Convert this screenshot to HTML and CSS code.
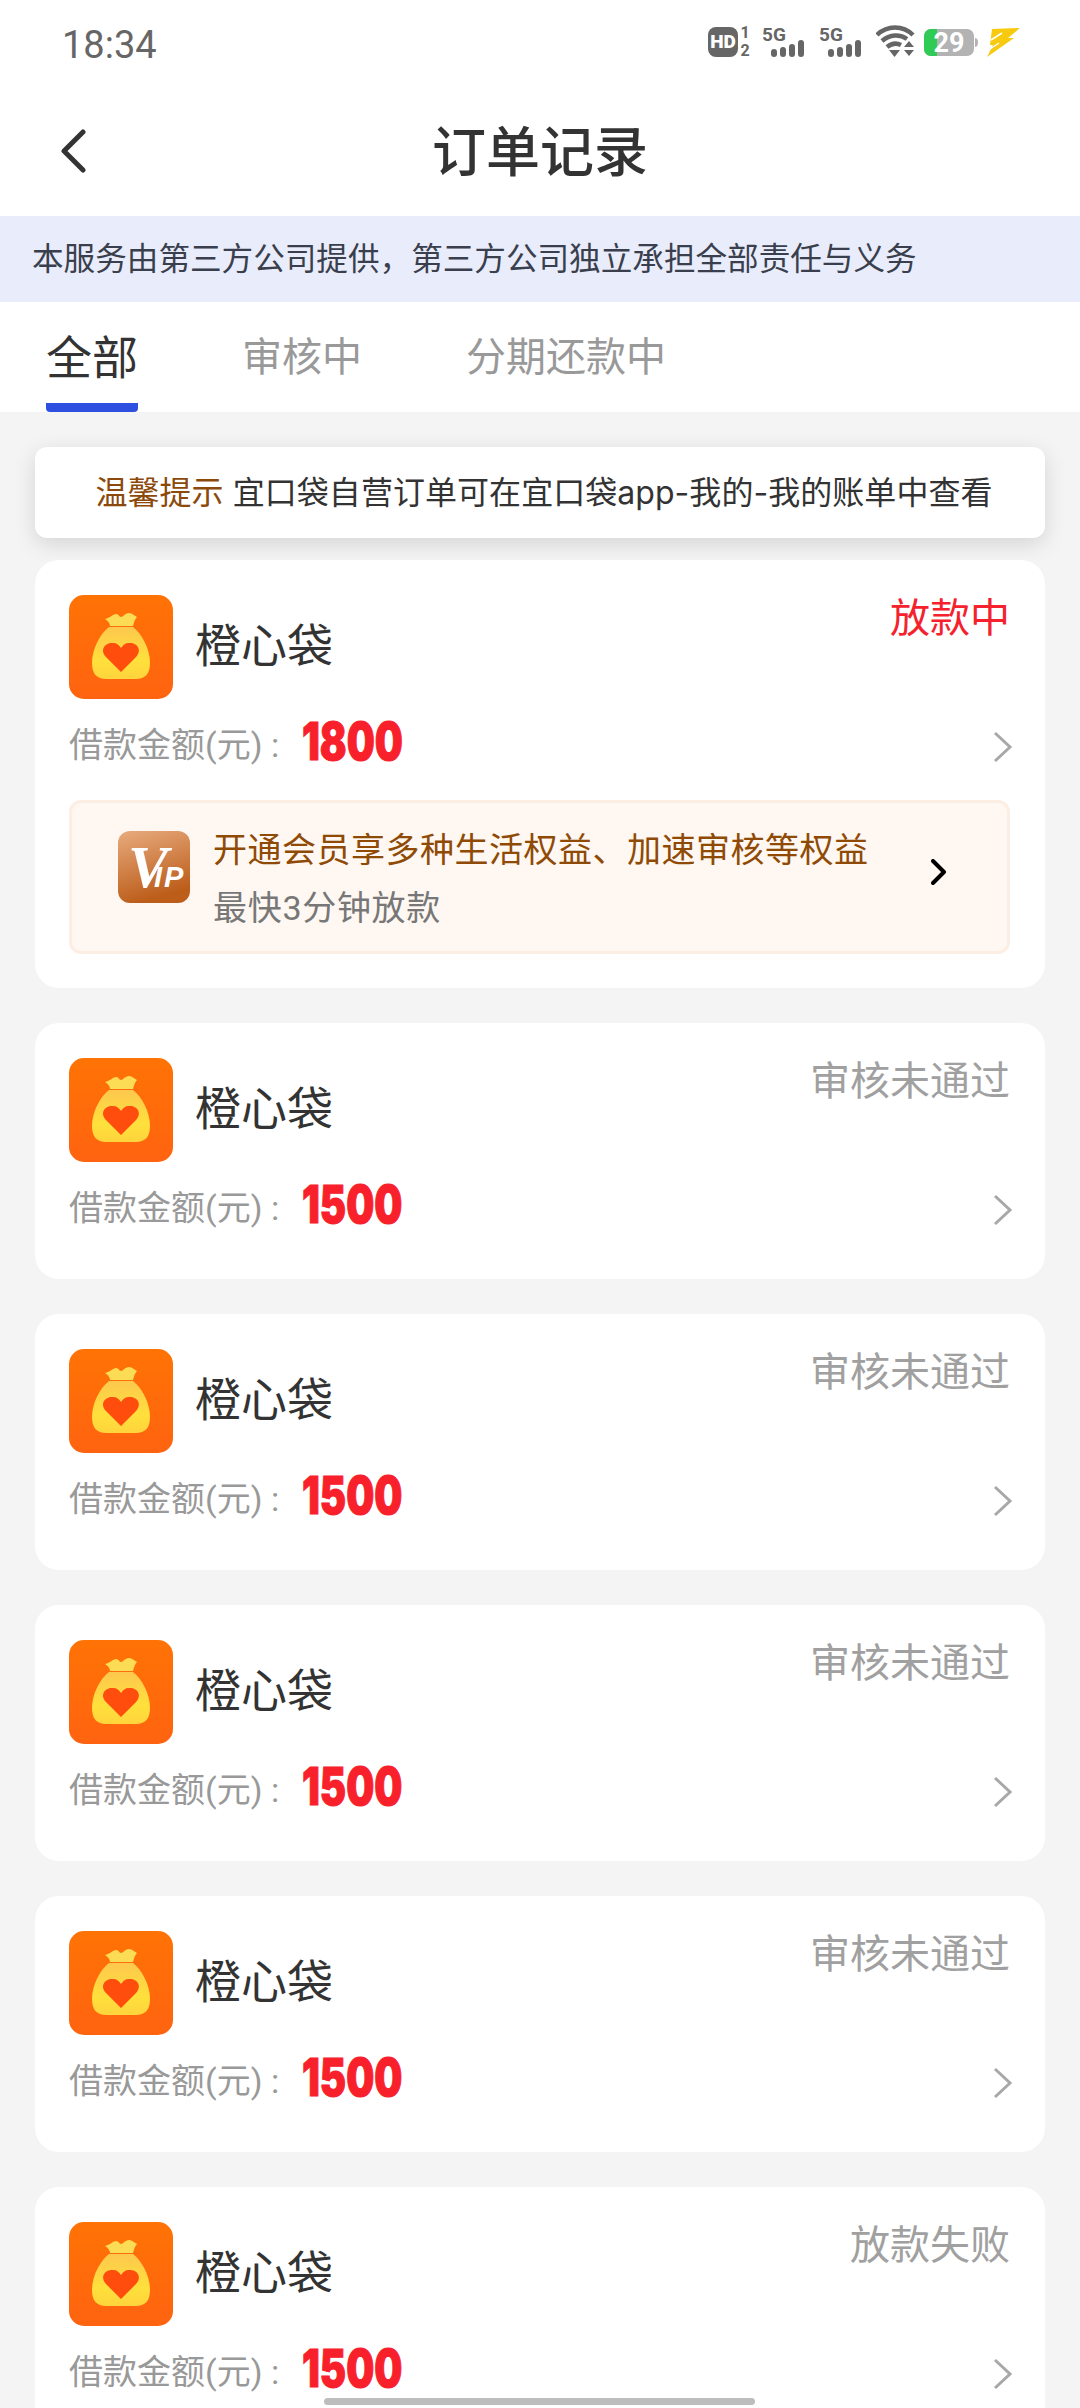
FILE: index.html
```html
<!DOCTYPE html>
<html lang="zh-CN">
<head>
  <meta charset="UTF-8">
  <title>订单记录</title>
  <link rel="stylesheet" href="styles.css">
</head>
<body>

<svg class="sprite" width="0" height="0">
  <defs>
    <linearGradient id="bagBg" x1="0" y1="0" x2="0" y2="1">
      <stop offset="0" stop-color="#ff7305"/>
      <stop offset="1" stop-color="#ff6310"/>
    </linearGradient>
    <linearGradient id="bagBody" x1="0" y1="0" x2="0" y2="1">
      <stop offset="0" stop-color="#fdc84e"/>
      <stop offset="0.65" stop-color="#ffe03c"/>
      <stop offset="1" stop-color="#fed43c"/>
    </linearGradient>
    <linearGradient id="vipBg" x1="0" y1="0" x2="0.3" y2="1">
      <stop offset="0" stop-color="#e8ab7e"/>
      <stop offset="1" stop-color="#bc5d1a"/>
    </linearGradient>
    <symbol id="bag" viewBox="0 0 104 104">
      <rect width="104" height="104" rx="15" fill="url(#bagBg)"/>
      <path d="M36 24C41 23 44 19 47 19C50 19 50 22 52 22C54 22 56 18 60 18C63 18 66 21 68 22C66 24 65 27 64 31L41 31C41 28 39 26 36 24Z" fill="#fcdb55"/>
      <path d="M40 32L64 32C73 39 81 54 81 68C81 79 76 84 67 84L37 84C28 84 23 79 23 68C23 54 31 39 40 32Z" fill="url(#bagBody)"/>
      <path d="M52 77L37 62C30 54 37 47 44 48C48 48 50 50 52 53C54 50 56 48 60 48C67 47 74 54 67 62Z" fill="#ff4d0d"/>
    </symbol>
    <symbol id="chevron" viewBox="0 0 20 32">
      <path d="M2 2L17 16L2 30" fill="none" stroke="#a8a8a8" stroke-width="3"/>
    </symbol>
  </defs>
</svg>

<div class="status-bar">
  <span class="time">18:34</span>
  <div class="status-icons">
    <svg class="ic-hd" width="44" height="42" viewBox="0 -6 44 42">
      <rect x="0" y="1" width="30" height="30" rx="8" fill="#666"/>
      <text x="15" y="22" class="hd-text">HD</text>
      <text x="37" y="12" class="sim-text">1</text>
      <text x="37" y="30" class="sim-text">2</text>
    </svg>
    <svg class="ic-signal" width="44" height="42" viewBox="0 -6 44 42">
      <text x="0" y="15" class="net-text">5G</text>
      <rect x="9" y="23" width="6" height="8" rx="3" fill="#666"/>
      <rect x="18" y="21" width="6" height="10" rx="3" fill="#666"/>
      <rect x="27" y="18" width="6" height="13" rx="3" fill="#666"/>
      <rect x="36" y="14" width="6" height="17" rx="3" fill="#666"/>
    </svg>
    <svg class="ic-signal" width="44" height="42" viewBox="0 -6 44 42">
      <text x="0" y="15" class="net-text">5G</text>
      <rect x="9" y="23" width="6" height="8" rx="3" fill="#666"/>
      <rect x="18" y="21" width="6" height="10" rx="3" fill="#666"/>
      <rect x="27" y="18" width="6" height="13" rx="3" fill="#666"/>
      <rect x="36" y="14" width="6" height="17" rx="3" fill="#666"/>
    </svg>
    <svg class="ic-wifi" width="39" height="42" viewBox="0 -6 39 42">
      <path d="M1 9C11 -1 27 -1 37 9" fill="none" stroke="#666" stroke-width="4.500"/>
      <path d="M6 15C14 8 24 8 31 13" fill="none" stroke="#666" stroke-width="4.500"/>
      <path d="M11 21C16 17 21 17 25 19" fill="none" stroke="#666" stroke-width="4.500"/>
      <path d="M13 24L24 24L18.500 31Z" fill="#666"/>
      <path d="M28 21L33 15L38 21ZM28 24L38 24L33 30Z" fill="#666"/>
    </svg>
    <svg class="ic-battery" width="54" height="42" viewBox="0 -6 54 42">
      <rect x="0" y="3" width="50" height="27" rx="7" fill="#b3b3b3"/>
      <path d="M7 3L13 3L13 30L7 30A7 7 0 0 1 0 23L0 10A7 7 0 0 1 7 3Z" fill="#2fcb55"/>
      <path d="M51 12C53 12 54 14 54 16.500C54 19 53 21 51 21Z" fill="#b3b3b3"/>
      <text x="25" y="26" class="bat-text">29</text>
    </svg>
    <svg class="ic-bolt" width="33" height="42" viewBox="0 -6 33 42">
      <path d="M5 3L33 2L21 12L27 12L0 31L6 19L3 19Z" fill="#f7c90f"/>
      <path d="M4 14L15 7M3 23L12 17" stroke="#fff" stroke-width="1.500"/>
    </svg>
  </div>
</div>

<div class="nav-bar">
  <svg class="back" width="26" height="44" viewBox="0 0 26 44">
    <path d="M23 3L4 22L23 41" fill="none" stroke="#333" stroke-width="5" stroke-linecap="round" stroke-linejoin="round"/>
  </svg>
  <h1>订单记录</h1>
</div>

<div class="notice">本服务由第三方公司提供，第三方公司独立承担全部责任与义务</div>

<div class="tabs">
  <div class="tab active">全部</div>
  <div class="tab">审核中</div>
  <div class="tab">分期还款中</div>
</div>

<div class="list">
  <div class="hint"><em>温馨提示</em> 宜口袋自营订单可在宜口袋app-我的-我的账单中查看</div>

  <div class="card has-promo">
    <div class="card-top">
      <svg class="logo"><use href="#bag"/></svg>
      <span class="name">橙心袋</span>
      <span class="state red">放款中</span>
    </div>
    <div class="amount-row">
      <span class="label">借款金额(元) :</span>
      <span class="amount">1800</span>
      <svg class="arrow"><use href="#chevron"/></svg>
    </div>
    <div class="promo">
      <svg class="vip" width="72" height="72" viewBox="0 0 72 72">
        <rect width="72" height="72" rx="12" fill="url(#vipBg)"/>
        <text x="10" y="56" class="vip-v">V<tspan class="vip-ip" dx="-14">IP</tspan></text>
      </svg>
      <div class="promo-text">
        <div class="promo-title">开通会员享多种生活权益、加速审核等权益</div>
        <div class="promo-sub">最快3分钟放款</div>
      </div>
      <svg class="promo-arrow" width="16" height="26" viewBox="0 0 16 26">
        <path d="M2 2L13 13L2 24" fill="none" stroke="#000" stroke-width="4" stroke-linecap="round" stroke-linejoin="round"/>
      </svg>
    </div>
  </div>

  <div class="card">
    <div class="card-top">
      <svg class="logo"><use href="#bag"/></svg>
      <span class="name">橙心袋</span>
      <span class="state">审核未通过</span>
    </div>
    <div class="amount-row">
      <span class="label">借款金额(元) :</span>
      <span class="amount">1500</span>
      <svg class="arrow"><use href="#chevron"/></svg>
    </div>
  </div>

  <div class="card">
    <div class="card-top">
      <svg class="logo"><use href="#bag"/></svg>
      <span class="name">橙心袋</span>
      <span class="state">审核未通过</span>
    </div>
    <div class="amount-row">
      <span class="label">借款金额(元) :</span>
      <span class="amount">1500</span>
      <svg class="arrow"><use href="#chevron"/></svg>
    </div>
  </div>

  <div class="card">
    <div class="card-top">
      <svg class="logo"><use href="#bag"/></svg>
      <span class="name">橙心袋</span>
      <span class="state">审核未通过</span>
    </div>
    <div class="amount-row">
      <span class="label">借款金额(元) :</span>
      <span class="amount">1500</span>
      <svg class="arrow"><use href="#chevron"/></svg>
    </div>
  </div>

  <div class="card">
    <div class="card-top">
      <svg class="logo"><use href="#bag"/></svg>
      <span class="name">橙心袋</span>
      <span class="state">审核未通过</span>
    </div>
    <div class="amount-row">
      <span class="label">借款金额(元) :</span>
      <span class="amount">1500</span>
      <svg class="arrow"><use href="#chevron"/></svg>
    </div>
  </div>

  <div class="card">
    <div class="card-top">
      <svg class="logo"><use href="#bag"/></svg>
      <span class="name">橙心袋</span>
      <span class="state">放款失败</span>
    </div>
    <div class="amount-row">
      <span class="label">借款金额(元) :</span>
      <span class="amount">1500</span>
      <svg class="arrow"><use href="#chevron"/></svg>
    </div>
  </div>
</div>

<div class="home-bar"></div>

</body>
</html>
```

FILE: styles.css
```css
* { margin: 0; padding: 0; box-sizing: border-box; }

body {
  font-family: Roboto, "Noto Sans CJK SC", sans-serif;
  width: 1080px;
  height: 2408px;
  overflow: hidden;
  background: #f4f4f4;
  color: #333;
}

.sprite { position: absolute; }

/* Status bar */
.status-bar {
  display: flex;
  align-items: center;
  justify-content: space-between;
  height: 84px;
  padding: 0 60px 0 62px;
  background: #fff;
}

.time {
  margin-top: 6px;
  font-size: 38px;
  color: #666;
}

.status-icons {
  display: flex;
  align-items: center;
  margin-top: -2px;
}

.ic-hd { margin-right: 10px; }
.ic-signal { margin-right: 13px; }
.ic-wifi { margin-right: 9px; }
.ic-battery { margin-right: 9px; }

.hd-text, .sim-text, .net-text, .bat-text {
  font-family: Roboto, sans-serif;
  font-weight: 700;
  text-anchor: middle;
}

.hd-text { font-size: 19px; font-weight: 900; fill: #fff; }
.sim-text { font-size: 16px; fill: #666; }
.net-text { font-size: 19px; fill: #666; text-anchor: start; }
.bat-text { font-size: 27px; fill: #fff; }

/* Nav */
.nav-bar {
  position: relative;
  display: flex;
  align-items: center;
  justify-content: center;
  height: 132px;
  background: #fff;
}

.nav-bar h1 {
  margin-top: -4px;
  font-size: 54px;
  font-weight: 500;
  color: #333;
}

.back {
  position: absolute;
  left: 60px;
  top: 45px;
}

.notice {
  height: 86px;
  line-height: 88px;
  padding-left: 32px;
  font-size: 31.600px;
  color: #3a3f4d;
  background: #e9ecfa;
}

/* Tabs */
.tabs {
  display: flex;
  gap: 104px;
  height: 110px;
  padding-left: 46px;
  background: #fff;
}

.tab {
  height: 110px;
  line-height: 112px;
  font-size: 40px;
  color: #999;
}

.tab.active {
  font-size: 46px;
  color: #333;
  border-bottom: 9px solid #2f4fe0;
  border-radius: 0 0 4px 4px;
}

/* List */
.list {
  padding: 35px 35px 0;
}

.hint {
  height: 91px;
  line-height: 91px;
  margin-bottom: 22px;
  padding-left: 8px;
  text-align: center;
  font-family: Inter, "Noto Sans CJK SC", sans-serif;
  font-size: 32px;
  letter-spacing: 0.050px;
  color: #333;
  background: #fff;
  border-radius: 12px;
  box-shadow: 0 6px 22px rgba(0, 0, 0, 0.13);
}

.hint em {
  font-style: normal;
  color: #8b4a0b;
}

.card {
  height: 256px;
  padding: 35px 35px 0 34px;
  margin-bottom: 35px;
  background: #fff;
  border-radius: 24px;
}

.card.has-promo { height: 428px; }

.card-top {
  display: flex;
  align-items: flex-start;
  height: 104px;
}

.logo {
  width: 104px;
  height: 104px;
  flex-shrink: 0;
}

.name {
  margin: 21px 0 0 22px;
  font-size: 46px;
  line-height: 60px;
  color: #333;
}

.state {
  margin: 1px 0 0 auto;
  font-size: 40px;
  line-height: 46px;
  color: #a0a0a0;
}

.state.red { color: #f5212d; }

.amount-row {
  display: flex;
  align-items: center;
  height: 46px;
  margin-top: 20px;
}

.label {
  font-size: 34px;
  color: #999;
}

.amount {
  display: inline-block;
  margin-left: 23px;
  font-family: Inter, sans-serif;
  font-size: 52px;
  font-weight: 900;
  line-height: 46px;
  color: #f8202a;
  -webkit-text-stroke: 1px #f8202a;
  transform: scaleX(0.76);
  transform-origin: left center;
}

.arrow {
  width: 20px;
  height: 32px;
  margin: 9px -3px 0 auto;
}

/* Member promo */
.promo {
  display: flex;
  align-items: flex-start;
  height: 154px;
  margin-top: 35px;
  padding: 28px 0 0 46px;
  background: #fef7f2;
  border: 3px solid #fdeee3;
  border-radius: 12px;
}

.vip { flex-shrink: 0; }

.vip-v {
  font-family: "Liberation Serif", serif;
  font-size: 60px;
  font-weight: 700;
  font-style: italic;
  fill: #fff;
}

.vip-ip {
  font-family: "Liberation Sans", sans-serif;
  font-size: 29px;
  letter-spacing: 2px;
}

.promo-text {
  margin: -5px 0 0 23px;
  font-size: 34px;
}

.promo-title {
  line-height: 48px;
  color: #8f4a05;
  letter-spacing: 0.500px;
}

.promo-sub {
  margin-top: 10px;
  line-height: 48px;
  letter-spacing: 0.700px;
  color: #777;
}

.promo-arrow {
  margin: 28px 60px 0 auto;
}

.home-bar {
  position: fixed;
  left: 324px;
  top: 2398px;
  width: 431px;
  height: 7px;
  background: #bdbdbd;
  border-radius: 4px;
}
```
